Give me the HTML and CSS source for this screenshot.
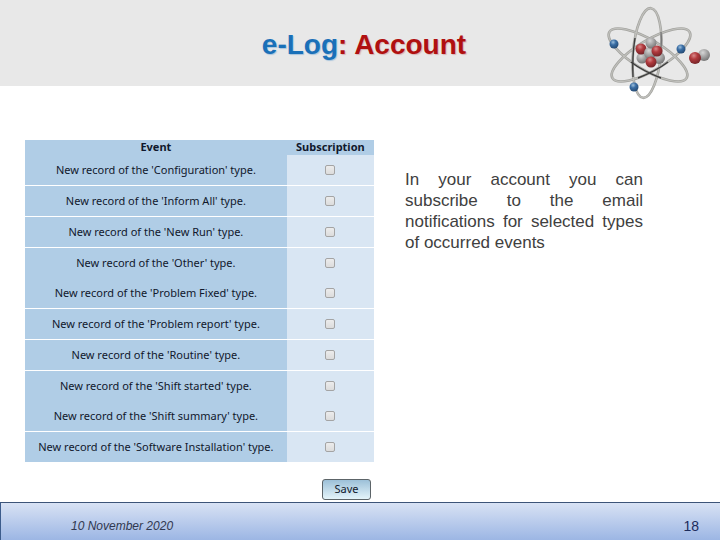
FILE: index.html
```html
<!DOCTYPE html>
<html lang="en">
<head>
  <meta charset="UTF-8" />
  <title>e-Log: Account</title>
  <link rel="stylesheet" href="styles.css">
</head>
<body>
  <header class="title-bar">
    <h1><span class="brand">e-Log</span>: Account</h1>
    <svg class="logo" viewBox="0 0 120 110" aria-hidden="true">
      <defs>
        <radialGradient id="red" cx="40%" cy="30%" r="75%">
          <stop offset="0" stop-color="#d98a8a" />
          <stop offset="0.4" stop-color="#b23a3e" />
          <stop offset="1" stop-color="#6e2226" />
        </radialGradient>
        <radialGradient id="grey" cx="40%" cy="30%" r="75%">
          <stop offset="0" stop-color="#d6d6d6" />
          <stop offset="0.5" stop-color="#a2a2a2" />
          <stop offset="1" stop-color="#707070" />
        </radialGradient>
        <radialGradient id="blue" cx="40%" cy="30%" r="75%">
          <stop offset="0" stop-color="#9dbfdc" />
          <stop offset="0.4" stop-color="#3a6ea5" />
          <stop offset="1" stop-color="#23466e" />
        </radialGradient>
      </defs>
      <!-- orbits -->
      <g fill="none" stroke="#a3a39f" stroke-width="2.6">
        <ellipse cx="47" cy="53" rx="14" ry="45" transform="rotate(5 47 53)" />
        <ellipse cx="48" cy="55" rx="45" ry="15" transform="rotate(31 48 55)" />
        <ellipse cx="51" cy="55" rx="45" ry="15" transform="rotate(-31 51 55)" />
      </g>
      <g fill="none" stroke="#c0c0bc" stroke-width="1.2">
        <ellipse cx="47" cy="53" rx="14" ry="45" transform="rotate(5 47 53)" />
        <ellipse cx="48" cy="55" rx="45" ry="15" transform="rotate(31 48 55)" />
        <ellipse cx="51" cy="55" rx="45" ry="15" transform="rotate(-31 51 55)" />
      </g>
      <!-- shaded parts of the orbits -->
      <g fill="none" stroke="#3c3c3c" stroke-width="1.4">
        <path d="M35 38Q32 56 33 77" />
        <path d="M68 62Q56 71 38 78" />
        <path d="M31 62Q43 71 61 78" />
        <path d="M61 32Q62 40 61 48" stroke="#777" />
      </g>
      <!-- nucleus -->
      <circle cx="42" cy="58" r="5.500" fill="url(#grey)" />
      <circle cx="59" cy="58" r="6" fill="url(#grey)" />
      <circle cx="41" cy="49" r="5.500" fill="url(#red)" />
      <circle cx="50" cy="53" r="6" fill="url(#grey)" />
      <circle cx="51" cy="43" r="5.500" fill="url(#grey)" />
      <circle cx="57" cy="51" r="5.500" fill="url(#red)" />
      <circle cx="51" cy="62" r="5.500" fill="url(#red)" />
      <!-- free particles -->
      <circle cx="104" cy="55" r="6" fill="url(#grey)" />
      <circle cx="95" cy="58" r="6" fill="url(#red)" />
      <!-- electrons -->
      <circle cx="14" cy="44" r="4.500" fill="url(#blue)" />
      <circle cx="81" cy="49" r="4.500" fill="url(#blue)" />
      <circle cx="34" cy="87" r="4.500" fill="url(#blue)" />
    </svg>
  </header>

  <main class="content">
    <form class="subscriptions">
      <table>
        <thead>
          <tr><th scope="col">Event</th><th scope="col">Subscription</th></tr>
        </thead>
        <tbody>
          <tr>
            <td><label for="ev-config">New record of the 'Configuration' type.</label></td>
            <td><input type="checkbox" id="ev-config"></td>
          </tr>
          <tr>
            <td><label for="ev-inform">New record of the 'Inform All' type.</label></td>
            <td><input type="checkbox" id="ev-inform"></td>
          </tr>
          <tr>
            <td><label for="ev-run">New record of the 'New Run' type.</label></td>
            <td><input type="checkbox" id="ev-run"></td>
          </tr>
          <tr class="joined">
            <td><label for="ev-other">New record of the 'Other' type.</label></td>
            <td><input type="checkbox" id="ev-other"></td>
          </tr>
          <tr>
            <td><label for="ev-fixed">New record of the 'Problem Fixed' type.</label></td>
            <td><input type="checkbox" id="ev-fixed"></td>
          </tr>
          <tr>
            <td><label for="ev-report">New record of the 'Problem report' type.</label></td>
            <td><input type="checkbox" id="ev-report"></td>
          </tr>
          <tr>
            <td><label for="ev-routine">New record of the 'Routine' type.</label></td>
            <td><input type="checkbox" id="ev-routine"></td>
          </tr>
          <tr class="joined">
            <td><label for="ev-started">New record of the 'Shift started' type.</label></td>
            <td><input type="checkbox" id="ev-started"></td>
          </tr>
          <tr>
            <td><label for="ev-summary">New record of the 'Shift summary' type.</label></td>
            <td><input type="checkbox" id="ev-summary"></td>
          </tr>
          <tr class="joined">
            <td><label for="ev-software">New record of the 'Software Installation' type.</label></td>
            <td><input type="checkbox" id="ev-software"></td>
          </tr>
        </tbody>
      </table>
      <button type="submit">Save</button>
    </form>

    <p class="note">In your account you can subscribe to the email notifications for selected types of occurred events</p>
  </main>

  <footer class="footer">
    <span class="date">10 November 2020</span>
    <span class="page">18</span>
  </footer>
</body>
</html>
```
FILE: styles.css
```css
*, *::before, *::after {
  box-sizing: border-box;
  margin: 0;
  padding: 0;
}

body {
  font-family: "Liberation Sans", Arial, sans-serif;
  background: #fff;
  color: #404040;
  display: flex;
  flex-direction: column;
  min-height: 100vh;
}

/* Title */
.title-bar {
  position: relative;
  display: flex;
  justify-content: center;
  padding: 30px 0 26px 8px;
  background: #e8e8e8;
}

h1 {
  font-size: 28px;
  line-height: 30px;
  color: #b01010;
  text-shadow: 1px 1px 1px #d8b4b4;
}

.brand {
  color: #1a70b8;
  text-shadow: 1px 1px 1px #a8c4dc;
}

.logo {
  position: absolute;
  top: 0;
  right: 0;
  width: 120px;
  height: 110px;
}

/* Content */
.content {
  flex: 1;
  display: flex;
  align-items: flex-start;
  gap: 31px;
  padding: 54px 77px 2px 25px;
}

.subscriptions {
  flex: 0 1 349px;
  display: flex;
  flex-direction: column;
  align-items: flex-end;
}

table {
  width: 100%;
  border-collapse: separate;
  border-spacing: 0;
  table-layout: fixed;
  font-family: "Noto Sans", "Open Sans", sans-serif;
  font-size: 11px;
  line-height: 14px;
  color: #10182c;
  text-align: center;
}

th {
  height: 15px;
  padding-bottom: 2px;
  line-height: 13px;
  background: #b0cde6;
}

th:first-child {
  width: 75%;
}

td {
  height: 31px;
  padding-bottom: 1px;
  border-bottom: 1px solid #fff;
  background: #b0cde6;
}

td:last-child {
  background: #d9e6f3;
}

.joined td {
  height: 30px;
  border-bottom: none;
}

input[type="checkbox"] {
  appearance: none;
  display: block;
  width: 10px;
  height: 10px;
  margin: 0 auto;
  border: 1px solid #a4a4a4;
  border-radius: 2px;
  background: linear-gradient(#ececec, #dcdcdc);
}

input[type="checkbox"]:checked {
  background: #3a6ea5;
}

button {
  width: 49px;
  height: 21px;
  margin: 17px 3px 0 0;
  padding-bottom: 2px;
  border: 1px solid #5c6468;
  border-radius: 3px;
  background: linear-gradient(#9cc0d8, #e4f4fa);
  font-family: "Noto Sans", "Open Sans", sans-serif;
  font-size: 11px;
  line-height: 14px;
  color: #10182c;
  cursor: pointer;
}

.note {
  flex: 1;
  padding-top: 29px;
  font-size: 17px;
  line-height: 21px;
  text-align: justify;
}

/* Footer */
.footer {
  display: flex;
  justify-content: space-between;
  align-items: center;
  height: 38px;
  padding: 8px 21px 0 70px;
  border-top: 1px solid #3c5478;
  border-left: 1px solid #3c5c8c;
  background: linear-gradient(#d8e2f4, #9cb6e4);
}

.date {
  font-size: 12px;
  font-style: italic;
  color: #303850;
}

.page {
  font-size: 14px;
  color: #1c2c5c;
}
```
